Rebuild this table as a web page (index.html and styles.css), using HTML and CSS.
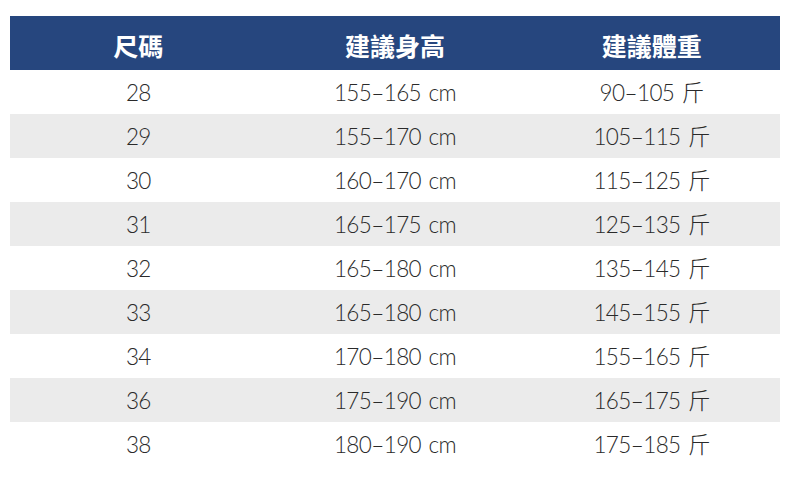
FILE: index.html
```html
<!DOCTYPE html>
<html lang="zh-Hant">
<head>
<meta charset="utf-8">
<link rel="stylesheet" href="styles.css">
</head>
<body>
<table class="size">
  <thead>
    <tr><th>尺碼</th><th>建議身高</th><th>建議體重</th></tr>
  </thead>
  <tbody>
    <tr><td>28</td><td>155–165 cm</td><td>90–105 斤</td></tr>
    <tr><td>29</td><td>155–170 cm</td><td>105–115 斤</td></tr>
    <tr><td>30</td><td>160–170 cm</td><td>115–125 斤</td></tr>
    <tr><td>31</td><td>165–175 cm</td><td>125–135 斤</td></tr>
    <tr><td>32</td><td>165–180 cm</td><td>135–145 斤</td></tr>
    <tr><td>33</td><td>165–180 cm</td><td>145–155 斤</td></tr>
    <tr><td>34</td><td>170–180 cm</td><td>155–165 斤</td></tr>
    <tr><td>36</td><td>175–190 cm</td><td>165–175 斤</td></tr>
    <tr><td>38</td><td>180–190 cm</td><td>175–185 斤</td></tr>
  </tbody>
</table>
</body>
</html>
```
FILE: styles.css
```css
html, body {
  margin: 0;
  padding: 0;
  background: #ffffff;
}
body {
  padding: 16px 10px 0 10px;
}
.size {
  width: 770px;
  border-collapse: collapse;
  table-layout: fixed;
  font-family: Lato, "Noto Sans CJK TC", sans-serif;
}
.size th {
  background: #26467e;
  color: #ffffff;
  height: 51px;
  padding: 3px 0 0 0;
  line-height: 30px;
  font-family: "Noto Sans CJK TC", sans-serif;
  font-weight: 700;
  font-size: 25px;
  text-align: center;
  vertical-align: middle;
}
.size td {
  height: 42px;
  padding: 2px 0 0 0;
  line-height: 26px;
  text-align: center;
  vertical-align: middle;
  font-size: 22.5px;
  font-weight: 300;
  color: #2a2a2a;
  letter-spacing: -0.6px;
  word-spacing: 2px;
}
.size tbody tr:nth-child(even) td {
  background: #ebebeb;
}
```
